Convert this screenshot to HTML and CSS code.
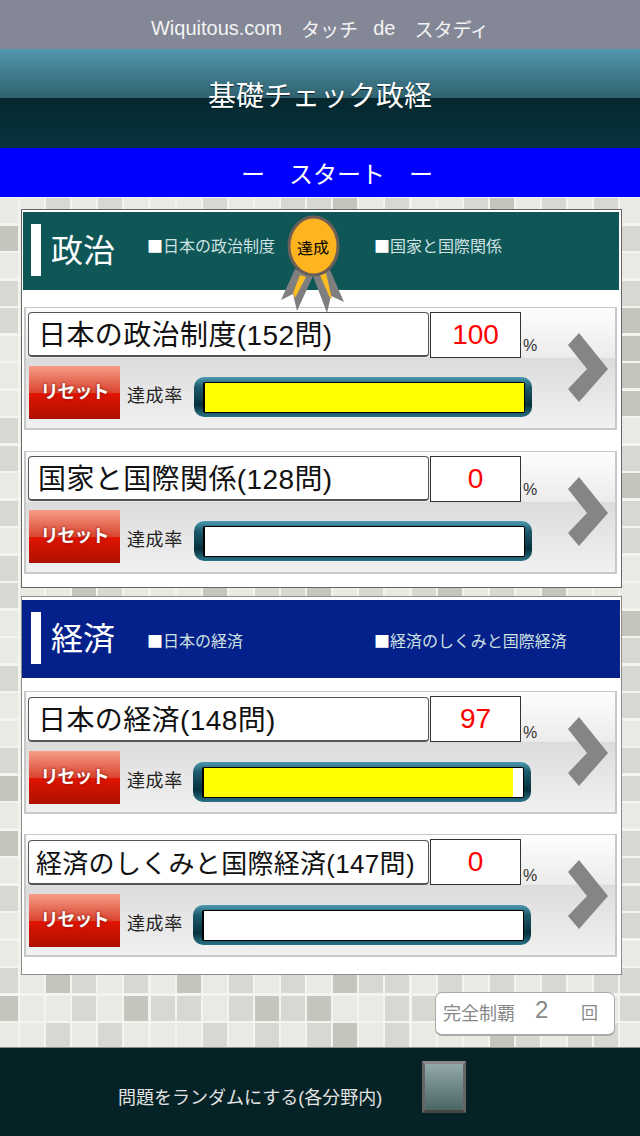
FILE: index.html
```html
<!DOCTYPE html>
<html lang="ja">
<head>
    <meta charset="UTF-8">
    <meta name="viewport" content="width=device-width, initial-scale=1.0">
    <title>基礎チェック政経</title>
    <link rel="stylesheet" href="styles.css">
</head>
<body>
    <div class="site-bar">
        <span>Wiquitous.com</span>
        <span class="kana">タッチ</span>
        <span>de</span>
        <span class="kana">スタディ</span>
    </div>
    <div class="title-bar">基礎チェック政経</div>
    <div class="start-bar">
        <span>ー</span>
        <span>スタート</span>
        <span>ー</span>
    </div>

    <div class="main">
        <div class="tiles" id="tiles"></div>

        <div class="panel panel-politics">
            <div class="panel-head">
                <div class="head-mark"></div>
                <div class="head-title">政治</div>
                <div class="head-tab"><span class="tab-mark">■</span>日本の政治制度</div>
                <div class="head-tab"><span class="tab-mark">■</span>国家と国際関係</div>
            </div>
            <svg class="medal" viewBox="0 0 130 120" width="130" height="120">
                <polygon points="55,68 73,75 57,110 53,93 41,99" fill="#7f7f7f"/>
                <polygon points="60,74 66,76 55,97 53,92" fill="#fbbd22"/>
                <polygon points="73,75 90,69 104,101 91,95 87,112" fill="#7f7f7f"/>
                <polygon points="80,74 86,72 92,98 89,95" fill="#fbbd22"/>
                <ellipse cx="73.5" cy="45" rx="24.5" ry="29" fill="#fdb41e" stroke="#6d5f58" stroke-width="3"/>
                <text class="medal-text" x="73" y="53" text-anchor="middle" transform="rotate(-3 73 47)">達成</text>
            </svg>

            <div class="card">
                <div class="card-body">
                    <div class="card-top">
                        <div class="name">日本の政治制度(152問)</div>
                        <div class="score">100</div>
                        <div class="percent">%</div>
                    </div>
                    <div class="card-bottom">
                        <div class="reset">リセット</div>
                        <div class="rate-label">達成率</div>
                        <div class="bar">
                            <div class="bar-inner"><div class="bar-fill" style="width: 100%"></div></div>
                        </div>
                    </div>
                </div>
                <svg class="chevron" viewBox="0 0 40 70" width="40" height="70">
                    <polygon points="11,0 40,36 11,69 0,56 19,36 0,12" fill="#858585"/>
                </svg>
            </div>

            <div class="card">
                <div class="card-body">
                    <div class="card-top">
                        <div class="name">国家と国際関係(128問)</div>
                        <div class="score">0</div>
                        <div class="percent">%</div>
                    </div>
                    <div class="card-bottom">
                        <div class="reset">リセット</div>
                        <div class="rate-label">達成率</div>
                        <div class="bar">
                            <div class="bar-inner"><div class="bar-fill" style="width: 0%"></div></div>
                        </div>
                    </div>
                </div>
                <svg class="chevron" viewBox="0 0 40 70" width="40" height="70">
                    <polygon points="11,0 40,36 11,69 0,56 19,36 0,12" fill="#858585"/>
                </svg>
            </div>
        </div>

        <div class="panel panel-economy">
            <div class="panel-head">
                <div class="head-mark"></div>
                <div class="head-title">経済</div>
                <div class="head-tab"><span class="tab-mark">■</span>日本の経済</div>
                <div class="head-tab"><span class="tab-mark">■</span>経済のしくみと国際経済</div>
            </div>

            <div class="card">
                <div class="card-body">
                    <div class="card-top">
                        <div class="name">日本の経済(148問)</div>
                        <div class="score">97</div>
                        <div class="percent">%</div>
                    </div>
                    <div class="card-bottom">
                        <div class="reset">リセット</div>
                        <div class="rate-label">達成率</div>
                        <div class="bar">
                            <div class="bar-inner"><div class="bar-fill" style="width: 97%"></div></div>
                        </div>
                    </div>
                </div>
                <svg class="chevron" viewBox="0 0 40 70" width="40" height="70">
                    <polygon points="11,0 40,36 11,69 0,56 19,36 0,12" fill="#858585"/>
                </svg>
            </div>

            <div class="card">
                <div class="card-body">
                    <div class="card-top">
                        <div class="name name-long">経済のしくみと国際経済(147問)</div>
                        <div class="score">0</div>
                        <div class="percent">%</div>
                    </div>
                    <div class="card-bottom">
                        <div class="reset">リセット</div>
                        <div class="rate-label">達成率</div>
                        <div class="bar">
                            <div class="bar-inner"><div class="bar-fill" style="width: 0%"></div></div>
                        </div>
                    </div>
                </div>
                <svg class="chevron" viewBox="0 0 40 70" width="40" height="70">
                    <polygon points="11,0 40,36 11,69 0,56 19,36 0,12" fill="#858585"/>
                </svg>
            </div>
        </div>

        <div class="clear-count">
            <span class="clear-label">完全制覇</span>
            <span class="clear-value">2</span>
            <span class="clear-unit">回</span>
        </div>
    </div>

    <div class="footer">
        <div class="random-label">問題をランダムにする(各分野内)</div>
        <div class="random-check"></div>
    </div>

    <script src="tiles.js"></script>
</body>
</html>
```

FILE: styles.css
```css
* {
    box-sizing: border-box;
}

body {
    font-family: "Liberation Sans", "Noto Sans CJK JP", sans-serif;
    margin: 0;
    width: 640px;
    height: 1136px;
    overflow: hidden;
    background-color: #062428;
}

.site-bar {
    height: 49px;
    background-color: #838796;
    color: #f4f4f4;
    font-size: 20px;
    display: flex;
    justify-content: center;
    align-items: center;
    gap: 15px;
    padding-top: 7px;
}

.kana {
    font-size: 19px;
    margin-left: 4px;
}

.title-bar {
    height: 99px;
    background: linear-gradient(#5296ad 0%, #30626f 49%, #06282f 49.5%, #07333f 100%);
    color: #fff;
    font-size: 28px;
    line-height: 28px;
    text-align: center;
    padding-top: 34px;
    text-shadow: 0 1px 1px #062028;
}

.start-bar {
    height: 49px;
    background-color: #0000ff;
    color: #fff;
    font-size: 24px;
    display: flex;
    justify-content: center;
    align-items: center;
    gap: 24px;
    padding-left: 34px;
}

/* fond carrelé */
.main {
    position: relative;
    height: 851px;
    overflow: hidden;
    background-color: #f3f3ef;
    padding: 12px 18px 0 21px;
    display: flex;
    flex-direction: column;
    border-bottom: 1px solid #8b8f8c;
}

.tiles {
    position: absolute;
    left: -6px;
    top: 1px;
    display: grid;
    grid-template-columns: repeat(25, 24px);
    grid-auto-rows: 25px;
    gap: 2.5px 2.1px;
}

.tile-l {
    background-color: #e9eae4;
}

.tile-m {
    background-color: #d7d8d2;
}

.tile-d {
    background-color: #c4c5bd;
}

.panel {
    position: relative;
    width: 601px;
    height: 379px;
    background-color: #fff;
    border: 1px solid #666;
    padding: 2px 2px 0 1px;
}

.panel-economy {
    margin-top: 8px;
    padding: 3px 1px 0 0;
    border-color: #8e8e8e;
}

.panel-head {
    height: 78px;
    display: flex;
    align-items: flex-start;
    color: #fff;
}

.panel-politics .panel-head {
    background-color: #0f5757;
}

.panel-economy .panel-head {
    background-color: #04208a;
}

.head-mark {
    width: 10px;
    height: 52px;
    margin: 12px 0 0 8px;
    background-color: #fff;
}

.panel-economy .head-mark {
    margin-left: 9px;
}

.head-title {
    width: 106px;
    padding-left: 10px;
    font-size: 32px;
    line-height: 52px;
    margin-top: 13px;
}

.head-tab {
    width: 227px;
    font-family: "Noto Sans CJK JP", sans-serif;
    font-size: 16px;
    line-height: 24px;
    margin-top: 21px;
    color: #cfe2e2;
    white-space: nowrap;
}

.panel-economy .head-tab {
    margin-top: 28px;
}

.tab-mark {
    color: #fff;
}

.medal {
    position: absolute;
    left: 218px;
    top: -9px;
}

.medal-text {
    font-family: "Noto Sans CJK JP", sans-serif;
    font-size: 16px;
    fill: #000;
}

.card {
    width: 593px;
    height: 123px;
    margin: 17px 0 0 1px;
    display: flex;
    align-items: center;
    background: linear-gradient(#fdfdfd 0%, #ececec 41%, #dcdcdc 42%, #f1f1f1 100%);
    border: 2px solid #c8c8c8;
    border-width: 1px 2px 2px 2px;
}

.panel-politics .card + .card {
    margin-top: 21px;
}

.panel-economy .card {
    margin: 13px 0 0 2px;
}

.panel-economy .card + .card {
    margin-top: 20px;
}

.card-body {
    width: 540px;
    margin-left: 2px;
    align-self: flex-start;
    flex-shrink: 0;
}

.card-top {
    display: flex;
    align-items: flex-end;
    height: 47px;
    margin-top: 3px;
}

.panel-economy .card-top {
    margin-top: 4px;
}

.name {
    width: 401px;
    height: 45px;
    margin-bottom: 1px;
    background-color: #fff;
    border: 1px solid #555;
    border-bottom-width: 2px;
    border-radius: 4px;
    font-size: 28px;
    letter-spacing: 0.4px;
    line-height: 46px;
    padding-left: 9px;
    color: #111;
    white-space: nowrap;
}

.name-long {
    font-size: 26px;
    letter-spacing: 0.3px;
    padding-left: 7px;
}

.score {
    width: 91px;
    height: 46px;
    margin-left: 1px;
    background-color: #fff;
    border: 1px solid #333;
    color: #f00;
    font-size: 28px;
    line-height: 44px;
    text-align: center;
}

.panel-economy .score {
    margin-bottom: 1px;
}

.percent {
    font-size: 16px;
    line-height: 20px;
    margin: 0 0 2px 2px;
    color: #333;
}

.panel-economy .percent {
    margin-bottom: 0;
}

.card-bottom {
    display: flex;
    align-items: flex-start;
    margin-top: 8px;
    padding-left: 1px;
}

.reset {
    width: 91px;
    height: 53px;
    background: linear-gradient(#f69d88 0%, #da4530 50%, #df1400 52%, #ae1000 100%);
    color: #fff;
    font-size: 18px;
    font-weight: bold;
    letter-spacing: -1px;
    line-height: 53px;
    text-align: center;
    text-shadow: 0 0 3px #7a0a00;
}

.rate-label {
    width: 74px;
    padding-left: 7px;
    font-size: 18px;
    letter-spacing: 0.6px;
    line-height: 24px;
    margin-top: 18px;
    color: #222;
    white-space: nowrap;
}

.panel-economy .rate-label {
    width: 73px;
}

.bar {
    width: 338px;
    height: 40px;
    margin-top: 11px;
    padding: 5px 7px 4px 9px;
    border-radius: 10px;
    background: linear-gradient(#4d9ab0 0%, #1c5a6c 25%, #06303c 70%, #2a7488 100%);
}

.bar-inner {
    height: 100%;
    background-color: #fff;
    border: 1px solid #000;
    border-left-width: 2px;
    border-radius: 2px;
}

.bar-fill {
    height: 100%;
    background-color: #ffff00;
}

.chevron {
    flex-shrink: 0;
}

.clear-count {
    position: relative;
    align-self: flex-end;
    width: 180px;
    height: 44px;
    margin: 17px 7px 0 0;
    padding: 0 0 4px 7px;
    background-color: #fff;
    border: 1px solid #aaa;
    border-bottom-width: 2px;
    border-radius: 7px;
    color: #888;
    display: flex;
    align-items: center;
    font-size: 18px;
}

.clear-label {
    width: 92px;
}

.clear-value {
    width: 46px;
    font-size: 24px;
    margin-top: -4px;
}

.clear-unit {
    font-size: 17px;
}

.footer {
    height: 88px;
    background-color: #052326;
    display: flex;
    align-items: flex-start;
    padding: 13px 0 0 118px;
}

.random-label {
    width: 304px;
    margin-top: 25px;
    font-size: 18px;
    line-height: 24px;
    color: #e2e2e2;
    white-space: nowrap;
}

.random-check {
    width: 44px;
    height: 52px;
    background: linear-gradient(#93a8a8, #4c6565);
    border: 3px solid #666;
    border-top-color: #8a8a8a;
    border-bottom-color: #444;
}
```

FILE: tiles.js
```js
// L = clair, M = moyen, D = foncé. Colonnes de gauche à droite, rangées de haut en bas.
const leftColumn = "LDLMMLLLMMLMLMMLLMLLMDLDLMLLMDL";
const rightColumn = "LMLMDDDDLMDMMLLDMMMLMMLMMMMLMML";
const fullRows = {
    0: "LLMLMLLLMLLMMDLMLLMDLMLML",
    14: "MLLDMLLLDLMMDLMLMDLMLDLLL",
    28: "MLDMLMLDLMLMLDMMLMLMLMLMM",
    29: "DLLMLDMMLMDMDLLMMLLLLLLLM",
    30: "LLMLMLLLMLMLMDLMLLLDMLMML"
};

const tiles = document.getElementById('tiles');
for (let row = 0; row < 31; row++) {
    for (let col = 0; col < 25; col++) {
        let tone = 'L';
        if (fullRows[row]) {
            tone = fullRows[row][col];
        } else if (col === 0) {
            tone = leftColumn[row];
        } else if (col === 24) {
            tone = rightColumn[row];
        }
        const tile = document.createElement('div');
        tile.className = `tile-${tone.toLowerCase()}`;
        tiles.appendChild(tile);
    }
}
```
